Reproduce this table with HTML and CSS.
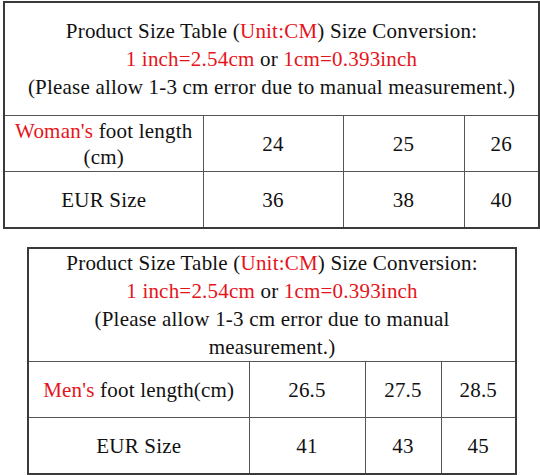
FILE: index.html
```html
<!DOCTYPE html>
<html>
<head>
<meta charset="utf-8">
<link rel="stylesheet" href="styles.css">
</head>
<body>
<div class="page">
  <table class="size-table t1">
    <colgroup>
      <col class="c1"><col class="c2"><col class="c3"><col class="c4">
    </colgroup>
    <tr class="head-row">
      <td colspan="4" class="head">
        Product Size Table (<span class="red">Unit:CM</span>) Size Conversion:<br>
        <span class="red">1 inch=2.54cm</span> or <span class="red">1cm=0.393inch</span><br>
        (Please allow 1-3 cm error due to manual measurement.)
      </td>
    </tr>
    <tr class="row">
      <td class="label"><span class="red">Woman's</span> foot length<br>(cm)</td>
      <td>24</td><td>25</td><td>26</td>
    </tr>
    <tr class="row">
      <td>EUR Size</td>
      <td>36</td><td>38</td><td>40</td>
    </tr>
  </table>

  <table class="size-table t2">
    <colgroup>
      <col class="c1"><col class="c2"><col class="c3"><col class="c4">
    </colgroup>
    <tr class="head-row">
      <td colspan="4" class="head">
        Product Size Table (<span class="red">Unit:CM</span>) Size Conversion:<br>
        <span class="red">1 inch=2.54cm</span> or <span class="red">1cm=0.393inch</span><br>
        (Please allow 1-3 cm error due to manual<br>measurement.)
      </td>
    </tr>
    <tr class="row">
      <td class="label"><span class="red">Men's</span> foot length(cm)</td>
      <td>26.5</td><td>27.5</td><td>28.5</td>
    </tr>
    <tr class="row">
      <td>EUR Size</td>
      <td>41</td><td>43</td><td>45</td>
    </tr>
  </table>
</div>
</body>
</html>
```

FILE: styles.css
```css
html, body {
  margin: 0;
  padding: 0;
  background: #ffffff;
}

.page {
  width: 540px;
  height: 475px;
  padding-top: 1px;
  box-sizing: border-box;
  font-family: "Liberation Serif", "DejaVu Serif", serif;
  color: #111111;
}

.size-table {
  border-collapse: collapse;
  table-layout: fixed;
  border: 2px solid #3a3a3a;
}

.size-table td {
  border: 1px solid #555555;
  text-align: center;
  vertical-align: middle;
  font-size: 21px;
  letter-spacing: 0.2px;
  line-height: 26px;
  padding: 0;
}

.size-table .head {
  height: 112px;
  line-height: 28px;
}

.size-table .row td {
  height: 55px;
}

.size-table .label {
  padding: 0 6px;
}

.red {
  color: #e5141b;
}

.t1 {
  margin-left: 3px;
  width: 535px;
}
.t1 .c1 { width: 199px; }
.t1 .c2 { width: 140px; }
.t1 .c3 { width: 121px; }
.t1 .c4 { width: 75px; }

.t2 {
  margin-left: 27px;
  margin-top: 18px;
  width: 488px;
}
.t2 .c1 { width: 221px; }
.t2 .c2 { width: 116px; }
.t2 .c3 { width: 76px; }
.t2 .c4 { width: 75px; }
.t2 .head {
  padding: 0 20px;
}
```
